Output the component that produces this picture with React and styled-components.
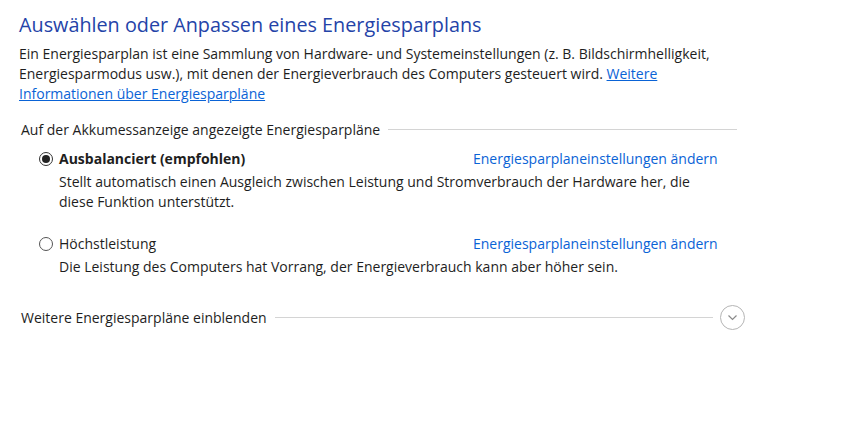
import React, { useState } from "react";
import styled, { createGlobalStyle } from "styled-components";

const GlobalStyle = createGlobalStyle`
  html, body {
    margin: 0;
    padding: 0;
    background: #fff;
  }
  body {
    font-family: "Segoe UI", "Open Sans", sans-serif;
    font-size: 14px;
    color: #1e1e1e;
  }
`;

const Page = styled.div`
  width: 848px;
  height: 441px;
  box-sizing: border-box;
  padding: 11px 0 0 19px;
  background: #fff;
`;

const Title = styled.h1`
  margin: 0;
  font-size: 19.8px;
  font-weight: 400;
  line-height: 28px;
  color: #2443a8;
`;

const Intro = styled.p`
  margin: 5px 0 0;
  line-height: 20px;
`;

const Link = styled.a`
  color: #0a63d6;
  text-decoration: ${(p) => (p.$underline ? "underline" : "none")};
  cursor: pointer;
`;

const Section = styled.div`
  display: flex;
  align-items: center;
  gap: 8px;
  width: 716px;
  margin: 16px 0 0 2px;
`;

const Rule = styled.div`
  flex: 1;
  height: 1px;
  background: #d4d4d4;
`;

const Plans = styled.div`
  display: flex;
  flex-direction: column;
  gap: 22px;
  margin: 10px 0 0 20px;
`;

const Plan = styled.div`
  display: grid;
  grid-template-columns: 434px auto;
  row-gap: 3px;
`;

const RadioLabel = styled.label`
  display: flex;
  align-items: center;
  gap: 6px;
  line-height: 20px;
  font-weight: ${(p) => (p.$checked ? 700 : 400)};
  cursor: pointer;
`;

const RadioDot = styled.span`
  width: 14px;
  height: 14px;
  box-sizing: border-box;
  border-radius: 50%;
  border: 1px solid ${(p) => (p.$checked ? "#333" : "#555")};
  display: inline-flex;
  align-items: center;
  justify-content: center;
  &::after {
    content: "";
    width: 8px;
    height: 8px;
    border-radius: 50%;
    background: ${(p) => (p.$checked ? "#222" : "transparent")};
  }
`;

const PlanLink = styled.div`
  line-height: 20px;
`;

const Description = styled.div`
  grid-column: 1 / span 2;
  padding-left: 20px;
  line-height: 20px;
`;

const Footer = styled.div`
  display: flex;
  align-items: center;
  width: 724px;
  margin: 28px 0 0 2px;
  gap: 8px;
`;

const ExpandButton = styled.button`
  width: 25px;
  height: 25px;
  padding: 0;
  border-radius: 50%;
  border: 1px solid #b5b5b5;
  background: #fff;
  display: flex;
  align-items: center;
  justify-content: center;
  margin-left: -1px;
  cursor: pointer;
`;

const plans = [
  {
    id: "balanced",
    name: "Ausbalanciert (empfohlen)",
    lines: [
      "Stellt automatisch einen Ausgleich zwischen Leistung und Stromverbrauch der Hardware her, die",
      "diese Funktion unterstützt.",
    ],
  },
  {
    id: "high",
    name: "Höchstleistung",
    lines: [
      "Die Leistung des Computers hat Vorrang, der Energieverbrauch kann aber höher sein.",
    ],
  },
];

export default function App() {
  const [selected, setSelected] = useState("balanced");

  return (
    <Page>
      <GlobalStyle />
      <Title>Auswählen oder Anpassen eines Energiesparplans</Title>
      <Intro>
        Ein Energiesparplan ist eine Sammlung von Hardware- und Systemeinstellungen (z. B. Bildschirmhelligkeit,
        <br />
        Energiesparmodus usw.), mit denen der Energieverbrauch des Computers gesteuert wird.{" "}
        <Link $underline>
          Weitere
          <br />
          Informationen über Energiesparpläne
        </Link>
      </Intro>

      <Section>
        <span>Auf der Akkumessanzeige angezeigte Energiesparpläne</span>
        <Rule />
      </Section>

      <Plans>
        {plans.map((plan) => {
          const checked = selected === plan.id;
          return (
            <Plan key={plan.id}>
              <RadioLabel $checked={checked} onClick={() => setSelected(plan.id)}>
                <RadioDot $checked={checked} />
                {plan.name}
              </RadioLabel>
              <PlanLink>
                <Link>Energiesparplaneinstellungen ändern</Link>
              </PlanLink>
              <Description>
                {plan.lines.map((line, i) => (
                  <div key={i}>{line}</div>
                ))}
              </Description>
            </Plan>
          );
        })}
      </Plans>

      <Footer>
        <span>Weitere Energiesparpläne einblenden</span>
        <Rule />
        <ExpandButton aria-label="Einblenden">
          <svg width="13" height="13" viewBox="0 0 13 13" fill="none">
            <path d="M2.5 4.5 L6.5 8.5 L10.5 4.5" stroke="#8a8a8a" strokeWidth="1.2" />
          </svg>
        </ExpandButton>
      </Footer>
    </Page>
  );
}
